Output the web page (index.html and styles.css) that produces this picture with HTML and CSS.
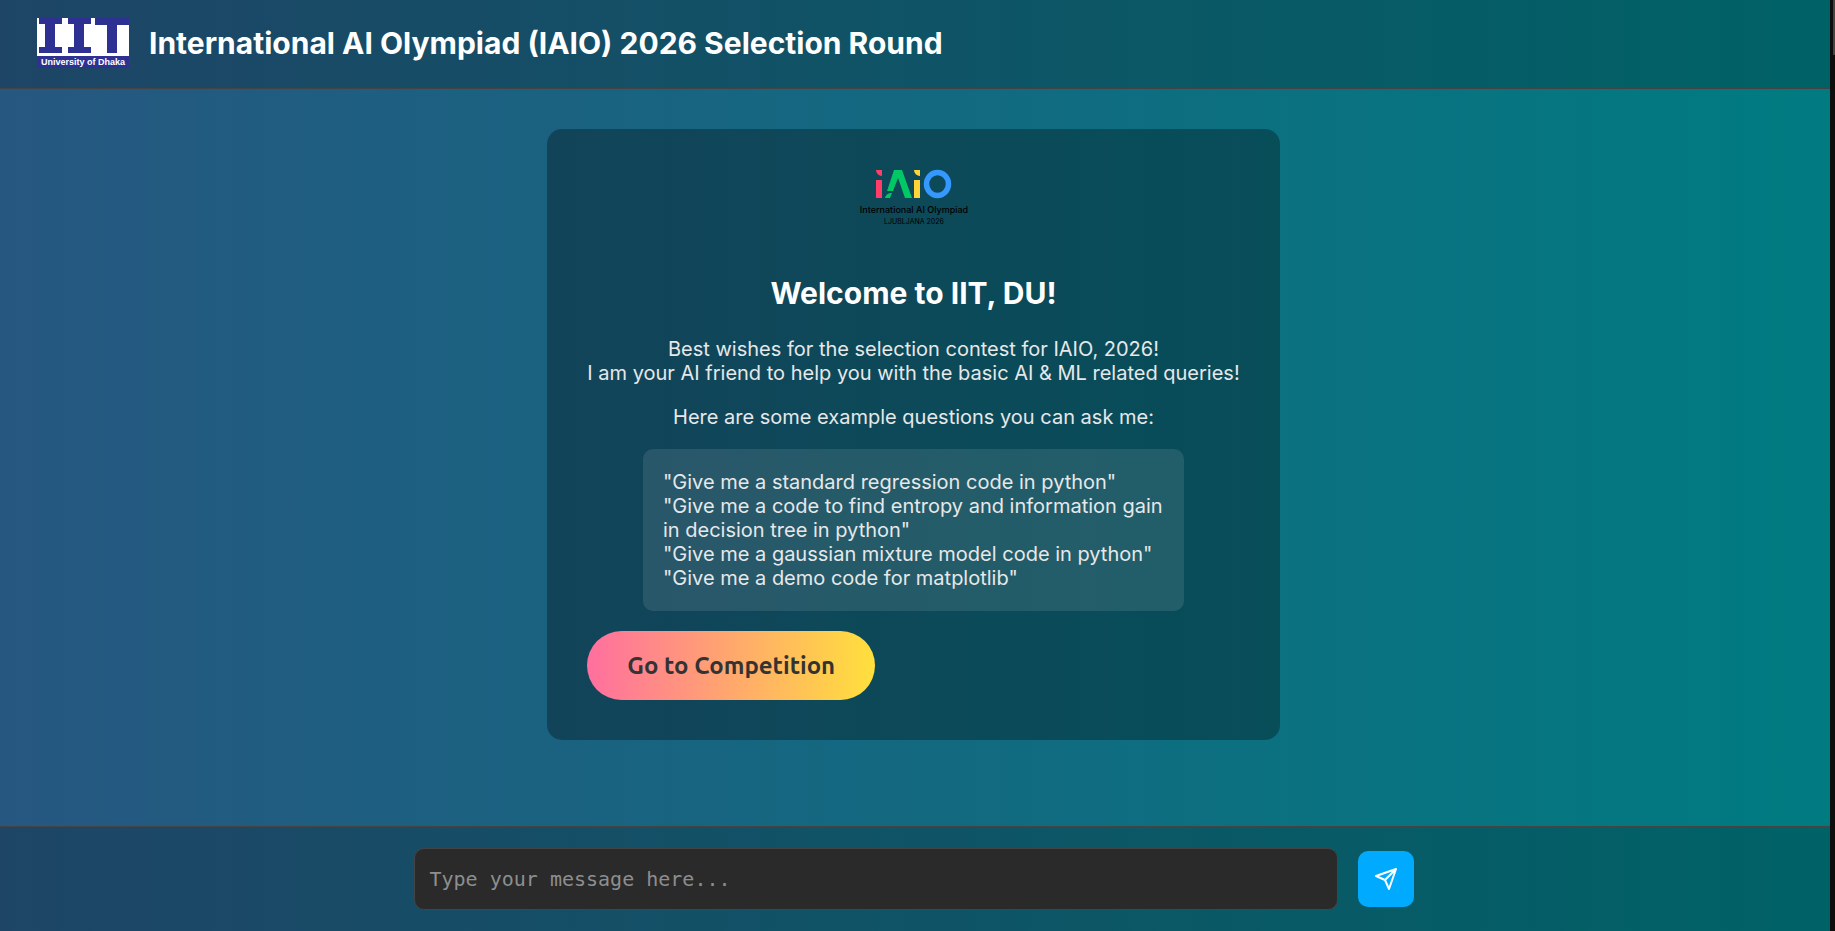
FILE: index.html
```html
<!DOCTYPE html>
<html lang="en">
<head>
<meta charset="utf-8">
<title>International AI Olympiad (IAIO) 2026 Selection Round</title>
<link rel="stylesheet" href="styles.css">
</head>
<body>
<div class="app">
  <header class="header">
    <svg class="iit-logo" viewBox="0 0 92 50" role="img" aria-label="IIT University of Dhaka">
      <rect width="92" height="50" fill="#fff"/>
      <g fill="#2e3192">
        <path d="M2 0H25V6H18V29H25V35H2V29H8V6H2Z"/>
        <path d="M31 0H54V6H47V29H54V35H31V29H37V6H31Z"/>
        <path d="M58 0H92V7H80V35H70V7H58Z"/>
        <rect y="38" width="92" height="12"/>
      </g>
      <text class="iit-logo-text" x="46" y="47" text-anchor="middle">University of Dhaka</text>
    </svg>
    <h1 class="title">International AI Olympiad (IAIO) 2026 Selection Round</h1>
  </header>
  <main class="main">
    <section class="card">
      <svg class="iaio-logo" viewBox="0 0 120 100" role="img" aria-label="IAIO">
        <path fill="#ff3d68" d="M22 21h6v6a6 6 0 0 1-6-6zM22 31h6v18h-6z"/>
        <path fill="#00c865" d="M40 21h8l10 28h-7l-7-20-5 13h-6zM31 49c1-4 4-5 7-5l-2 5z"/>
        <path fill="#ffd439" d="M60 21h6v6a6 6 0 0 1-6-6zM60 31h6v18h-6z"/>
        <ellipse cx="83.500" cy="35" rx="11" ry="11.500" fill="none" stroke="#3598ff" stroke-width="5.500"/>
        <text class="iaio-name" x="60" y="64" text-anchor="middle">International AI Olympiad</text>
        <text class="iaio-place" x="60" y="75" text-anchor="middle">LJUBLJANA 2026</text>
      </svg>
      <h2 class="welcome">Welcome to IIT, DU!</h2>
      <p class="text">Best wishes for the selection contest for IAIO, 2026!<br>I am your AI friend to help you with the basic AI &amp; ML related queries!</p>
      <p class="text">Here are some example questions you can ask me:</p>
      <div class="examples">"Give me a standard regression code in python"<br>"Give me a code to find entropy and information gain in decision tree in python"<br>"Give me a gaussian mixture model code in python"<br>"Give me a demo code for matplotlib"</div>
      <button class="go" type="button">Go to Competition</button>
    </section>
  </main>
  <footer class="footer">
    <form class="composer">
      <textarea class="message" rows="1" placeholder="Type your message here..." aria-label="Message"></textarea>
      <button class="send" type="button" aria-label="Send">
        <svg viewBox="0 0 24 24" width="24" height="24" fill="none" stroke="#fff" stroke-width="2" stroke-linecap="round" stroke-linejoin="round"><path d="M22 2 11 13M22 2l-7 20-4-9-9-4z"/></svg>
      </button>
    </form>
  </footer>
</div>
<div class="rail"><div class="thumb"></div></div>
</body>
</html>
```
FILE: styles.css
```css
* { box-sizing: border-box; }
body {
  margin: 0;
  display: flex;
  height: 100vh;
  background: #0e0e0e;
  font-family: Inter, "Liberation Sans", sans-serif;
  font-size: 20px;
  color: #fff;
}
.app {
  flex: 1;
  display: flex;
  flex-direction: column;
  background: linear-gradient(90deg, #265780, #007b80);
}
.rail { width: 5px; display: flex; justify-content: flex-end; }
.thumb { width: 2px; height: 55px; background: #444; }
.header {
  display: flex;
  align-items: center;
  gap: 20px;
  padding: 18px 37px 20px;
  background: rgba(0, 0, 0, 0.2);
  border-bottom: 1px solid #444;
}
.iit-logo { width: 92px; height: 50px; }
.iit-logo-text { font: bold 9px "Liberation Sans", sans-serif; fill: #fff; }
.title { margin: 0; font-size: 30px; line-height: 36px; font-weight: 700; }
.main { flex: 1; padding: 40px 3px 40px 0; display: flex; justify-content: center; align-items: flex-start; }
.card {
  display: flex;
  flex-direction: column;
  align-items: center;
  padding: 40px;
  background: rgba(0, 0, 0, 0.3);
  border-radius: 15px;
}
.iaio-logo { width: 120px; height: 100px; margin-top: -20px; }
.iaio-name { font: 500 9px Inter, sans-serif; fill: #000; }
.iaio-place { font: 7px Inter, sans-serif; fill: #000; }
.welcome { margin: 26px 0; font-size: 30px; line-height: 36px; font-weight: 700; }
.text { margin: 0 0 20px; line-height: 24px; text-align: center; color: #e6e8e9; }
.examples {
  max-width: 541px;
  padding: 21px 20px;
  line-height: 24px;
  color: #e6e8e9;
  background: rgba(255, 255, 255, 0.1);
  border-radius: 10px;
}
.go {
  align-self: flex-start;
  margin-top: 20px;
  padding: 20px 40px;
  border: 0;
  border-radius: 35px;
  background: linear-gradient(90deg, #ff6f9f, #ffe03c);
  color: #333;
  font: 600 24px/29px Ubuntu, "Noto Sans", sans-serif;
}
.footer { padding: 21px 3px 21px 0; background: rgba(0, 0, 0, 0.2); border-top: 1px solid #444; }
.composer { display: flex; align-items: center; gap: 20px; width: 100%; max-width: 1000px; margin: 0 auto; }
.message {
  flex: 1;
  height: 62px;
  padding: 18px 15px;
  border: 1px solid #444;
  border-radius: 10px;
  background: #2a2a2a;
  color: #fff;
  font: 20px/24px "DejaVu Sans Mono", monospace;
  resize: none;
  overflow: hidden;
}
.message::placeholder { color: #8e8e8e; }
.send {
  display: flex;
  padding: 16px;
  border: 0;
  border-radius: 10px;
  background: #0af;
}
```
